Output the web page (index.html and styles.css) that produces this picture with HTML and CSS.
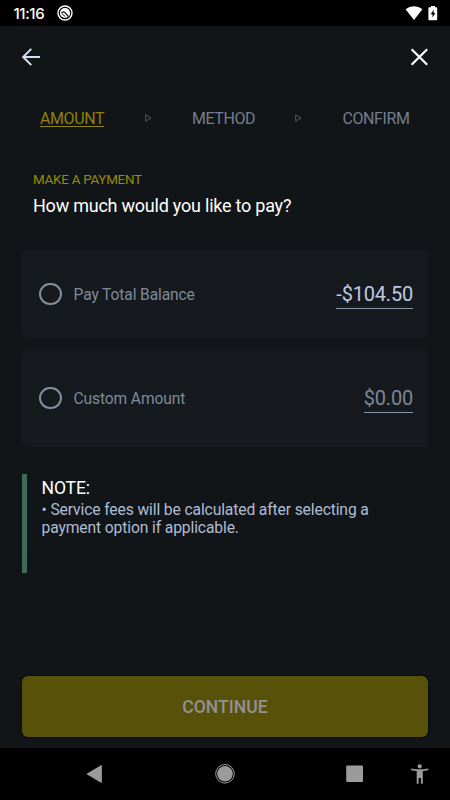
FILE: index.html
```html
<!DOCTYPE html>
<html lang="en">
<head>
<meta charset="utf-8">
<title>Make a payment</title>
<link rel="stylesheet" href="styles.css">
</head>
<body>
<div class="screen">
  <div class="status">
    <span class="clock">11:16</span>
    <svg class="app-icon" width="16" height="16" viewBox="0 0 16 16"><circle cx="8" cy="8" r="7" fill="none" stroke="#fff" stroke-width="1.4"/><circle cx="8" cy="8" r="5.1" fill="#fff"/><path d="M4.400 8.300Q6.500 5.600 8.500 8.200L11.500 11.600" fill="none" stroke="#000" stroke-width="1.200"/><path d="M5.200 9.200 8.300 11.500" fill="none" stroke="#000" stroke-width=".9"/></svg>
    <svg class="wifi" width="18" height="14" viewBox="0 0 18 14"><path d="M9 14 .6 3.2Q4.2.2 9 .2t8.4 3Z" fill="#fff"/></svg>
    <svg class="battery" width="10" height="15" viewBox="0 0 10 15"><path d="M3 1.2V0h4v1.2h1.2q1 0 1 1V13.3q0 1-1 1H1.400q-1 0-1-1V2.200q0-1 1-1Z" fill="#fff"/><path d="M5.600 3.800 2.700 8.300h1.800v3.200L7.300 7H5.600Z" fill="#000"/></svg>
  </div>
  <header class="topbar">
    <svg width="20" height="20" viewBox="0 0 20 20"><path d="M19 10H2M10.300 1.900 2.200 10l8.100 8.100" fill="none" stroke="#d5dff2" stroke-width="2"/></svg>
    <svg width="20" height="20" viewBox="0 0 20 20"><path d="m2.600 2.200 15.600 15.600M18.200 2.200 2.600 17.800" fill="none" stroke="#fff" stroke-width="2.200"/></svg>
  </header>
  <nav class="steps">
    <span class="step current">AMOUNT</span>
    <svg class="arrow" width="7" height="8" viewBox="0 0 7 8"><path d="M.7.8 6 4 .7 7.200Z" fill="none" stroke="#626974" stroke-width=".8"/></svg>
    <span class="step">METHOD</span>
    <svg class="arrow" width="7" height="8" viewBox="0 0 7 8"><path d="M.7.8 6 4 .7 7.200Z" fill="none" stroke="#626974" stroke-width=".8"/></svg>
    <span class="step">CONFIRM</span>
  </nav>
  <section class="heading">
    <div class="eyebrow">MAKE A PAYMENT</div>
    <h1>How much would you like to pay?</h1>
  </section>
  <div class="option total">
    <span class="radio"></span><span class="label">Pay Total Balance</span><span class="value">-$104.50</span>
  </div>
  <div class="option custom">
    <span class="radio"></span><span class="label">Custom Amount</span><span class="value empty">$0.00</span>
  </div>
  <aside class="note">
    <div class="note-title">NOTE:</div>
    <div class="note-text">• Service fees will be calculated after selecting a<br>payment option if applicable.</div>
  </aside>
  <button class="continue">CONTINUE</button>
  <footer class="navbar">
    <svg width="450" height="52" viewBox="0 0 450 52"><g fill="#9b9b9b"><path d="M86.300 26 101 17.300q.9-.5.9.5v16.400q0 1-.9.5Z"/><circle cx="225" cy="25.800" r="7.800"/><circle cx="225" cy="25.800" r="9.300" fill="none" stroke="#9b9b9b" stroke-width="1"/><rect x="346.200" y="17.500" width="16.800" height="16.600" rx="1"/><circle cx="419.700" cy="18.300" r="2.100"/><path d="M411.300 20.400q8.400 1.900 16.800 0l.4 1.700q-3 .8-5.700 1v12.700h-1.900v-5.900h-2.300v5.900h-1.900V23.100q-2.900-.2-5.800-1Z"/></g></svg>
  </footer>
</div>
</body>
</html>
```

FILE: styles.css
```css
* { box-sizing: border-box; }
body { margin: 0; background: #111518; font-family: Roboto, "Liberation Sans", sans-serif; }
svg { display: block; flex: none; }
.screen { width: 450px; height: 800px; display: flex; flex-direction: column; overflow: hidden; }
.status { flex: none; height: 26px; background: #000; display: flex; align-items: center; padding: 0 12px 0 13px; }
.clock { font: 500 15px/26px Inter, Roboto, sans-serif; color: #fff; width: 43.500px; letter-spacing: -.4px; padding: 1px 0 0 .5px; }
.wifi { margin-left: auto; }
.battery { margin-left: 5px; }
.topbar { flex: none; height: 62px; display: flex; justify-content: space-between; align-items: center; padding: 0 21px; }
.steps { flex: none; height: 60px; display: flex; justify-content: space-between; align-items: center; padding: 1px 40.500px 0 40px; }
.step { font-size: 16px; letter-spacing: -.4px; color: #747e90; }
.current { color: #8e8109; text-decoration: underline; text-underline-offset: 2px; text-decoration-thickness: 1px; margin-right: .5px; }
.arrow { margin-bottom: 2px; }
.heading { flex: none; height: 102px; padding: 23px 33px 0; }
.eyebrow { font-size: 13.400px; letter-spacing: -.25px; line-height: 18px; color: #968b05; }
h1 { margin: 5px 0 0; font-size: 18px; letter-spacing: -.23px; line-height: 24px; font-weight: 400; color: #fff; }
.option { flex: none; margin: 0 22px; padding: 0 15px 0 17px; background: #161a1e; border-radius: 5px; display: flex; align-items: center; }
.total { height: 88px; }
.custom { height: 98px; margin-top: 11px; }
.radio { width: 22.500px; height: 22.500px; border: 2px solid #848e9f; border-radius: 50%; }
.label { font-size: 15.600px; letter-spacing: -.12px; color: #7e899b; margin-left: 12px; padding-top: 1px; }
.value { margin-left: auto; font-size: 20px; letter-spacing: -.2px; line-height: 28px; color: #bdcae0; border-bottom: 1px solid #8896a8; padding-top: 1px; }
.empty { color: #7d8797; }
.note { flex: none; height: 99px; margin: 27px 22px 0; border-left: 5px solid #3e6b58; padding: 3px 0 0 14.500px; }
.note-title { font-size: 17.600px; letter-spacing: -.15px; line-height: 22px; color: #fff; }
.note-text { font-size: 15.700px; letter-spacing: -.14px; line-height: 18px; color: #afbcd2; white-space: nowrap; margin-top: 2px; }
.continue { flex: none; height: 61px; margin: auto 22px 11px; border: 0; border-radius: 6px; background: #57510a; color: #929292; font: 500 17.600px Roboto, sans-serif; box-shadow: 0 0 2px #000; }
.navbar { flex: none; height: 52px; background: #000; }
```
